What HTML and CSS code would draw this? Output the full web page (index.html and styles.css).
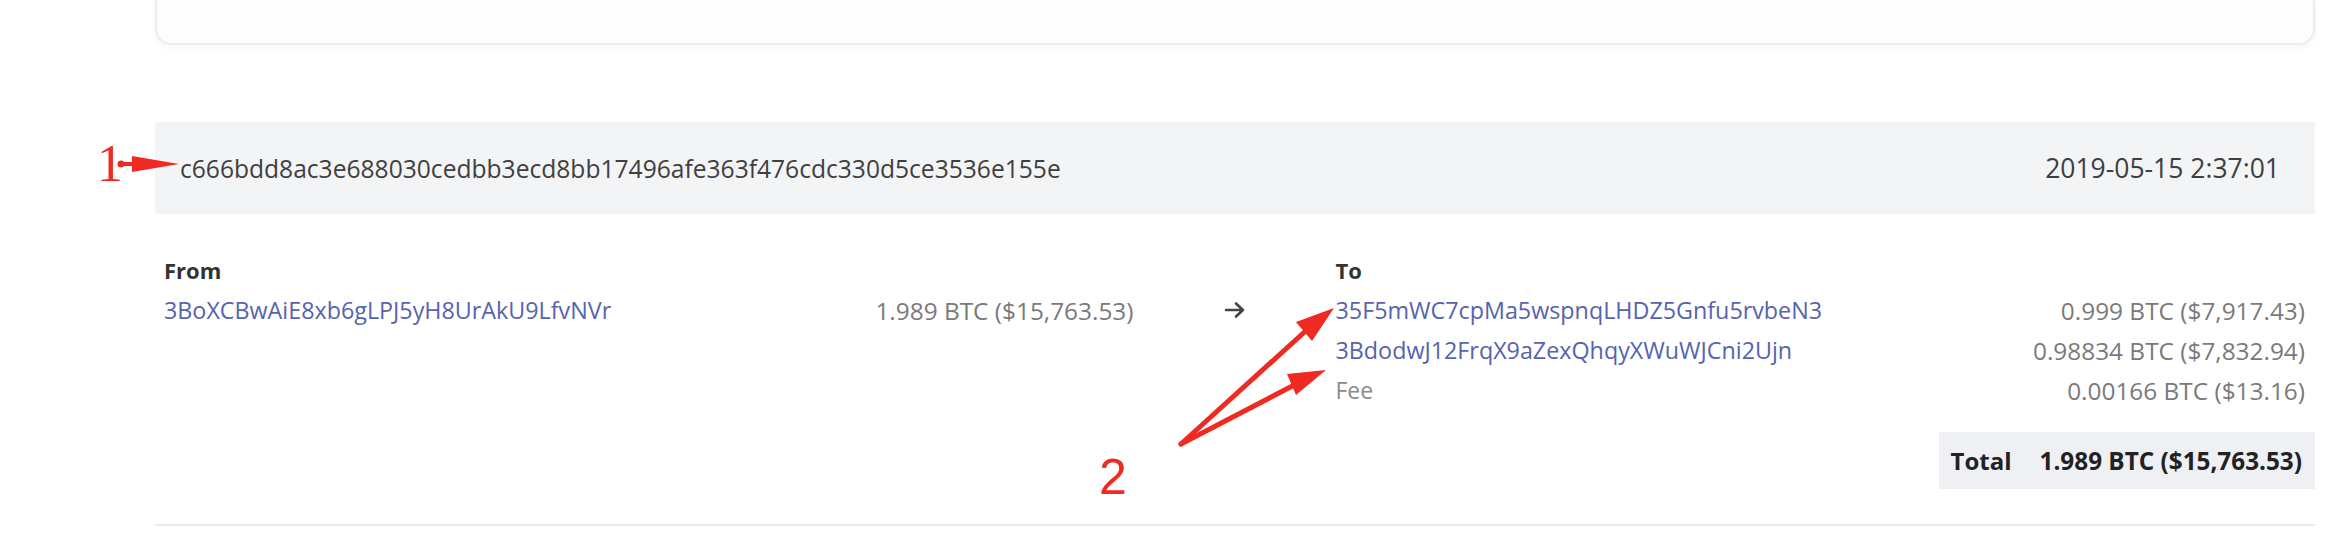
FILE: index.html
```html
<!DOCTYPE html>
<html lang="en">
<head>
<meta charset="utf-8">
<title>Transaction</title>
<link rel="stylesheet" href="styles.css">
</head>
<body>
<div class="page">
  <div class="top-card"></div>

  <section class="tx">
    <div class="tx-head">
      <span class="tx-hash">c666bdd8ac3e688030cedbb3ecd8bb17496afe363f476cdc330d5ce3536e155e</span>
      <span class="tx-date">2019-05-15 2:37:01</span>
    </div>
    <div class="tx-body">
      <div class="col">
        <div class="label">From</div>
        <div class="line">
          <a class="addr" href="#">3BoXCBwAiE8xb6gLPJ5yH8UrAkU9LfvNVr</a>
          <span class="amt">1.989 BTC ($15,763.53)</span>
        </div>
      </div>
      <div class="arrow-col">
        <div class="label">&nbsp;</div>
        <div class="line center">
          <svg class="arrow-icon" width="22" height="18" viewBox="0 0 22 18" aria-label="to">
            <path d="M2 9 H19 M12 2.5 L19 9 L12 15.5" fill="none" stroke="#444" stroke-width="2.6" stroke-linecap="round" stroke-linejoin="round"/>
          </svg>
        </div>
      </div>
      <div class="col">
        <div class="label">To</div>
        <div class="line">
          <a class="addr" href="#">35F5mWC7cpMa5wspnqLHDZ5Gnfu5rvbeN3</a>
          <span class="amt">0.999 BTC ($7,917.43)</span>
        </div>
        <div class="line">
          <a class="addr" href="#">3BdodwJ12FrqX9aZexQhqyXWuWJCni2Ujn</a>
          <span class="amt">0.98834 BTC ($7,832.94)</span>
        </div>
        <div class="line">
          <span class="fee">Fee</span>
          <span class="amt">0.00166 BTC ($13.16)</span>
        </div>
        <div class="total-row">
          <div class="total">
            <span class="total-label">Total</span>
            <span class="total-amt">1.989 BTC ($15,763.53)</span>
          </div>
        </div>
      </div>
    </div>
  </section>
</div>

<div class="annotations">
  <span class="num num-1">1</span>
  <span class="num num-2">2</span>
  <svg class="arrows" width="2342" height="540" viewBox="0 0 2342 540">
    <g fill="#ee2a22" stroke="#ee2a22" stroke-linecap="round">
      <circle cx="121" cy="164" r="3.5" stroke="none"/>
      <line x1="120" y1="164" x2="140" y2="164" stroke-width="4"/>
      <polygon points="132,156 179,164 132,172" stroke="none"/>
      <line x1="1181" y1="444" x2="1310" y2="327" stroke-width="5"/>
      <polygon points="1296,322 1334,308 1312,341" stroke="none"/>
      <line x1="1181" y1="444" x2="1300" y2="382" stroke-width="5"/>
      <polygon points="1287,374 1326,370 1296,395" stroke="none"/>
    </g>
  </svg>
</div>
</body>
</html>
```

FILE: styles.css
```css
html, body {
  margin: 0;
  padding: 0;
  background: #ffffff;
}

body {
  position: relative;
  width: 2342px;
  height: 540px;
  overflow: hidden;
  font-family: "Open Sans", "Noto Sans", "Liberation Sans", sans-serif;
  color: #333;
}

.page {
  padding-left: 155px;
  width: 2160px;
}

.top-card {
  height: 43px;
  border: 2px solid #ececec;
  border-top: none;
  border-radius: 0 0 16px 16px;
  box-shadow: 0 3px 6px rgba(0, 0, 0, 0.04);
  background: #fdfdfd;
}

.tx {
  margin-top: 77px;
  border-bottom: 2px solid #e8e8e8;
}

.tx-head {
  height: 92px;
  background: #f3f4f6;
  display: flex;
  align-items: center;
  justify-content: space-between;
  padding: 0 35px 0 25px;
  color: #3f3f3f;
}

.tx-hash {
  font-size: 24.6px;
}

.tx-date {
  font-size: 26.5px;
}

.tx-body {
  display: grid;
  grid-template-columns: 1fr 202px 1fr;
  padding: 36px 10px 35px 9px;
}

.label {
  font-weight: 700;
  font-size: 22px;
  line-height: 40px;
  color: #333;
}

.line {
  display: flex;
  justify-content: space-between;
  align-items: center;
  height: 40px;
}

.line.center {
  justify-content: center;
}

.arrow-icon {
  display: block;
}

.addr {
  color: #5663ad;
  text-decoration: none;
  font-size: 23.3px;
}

.amt {
  color: #7a7a7a;
  font-size: 24.4px;
}

.fee {
  color: #8a8a8a;
  font-size: 23px;
}

.total-row {
  display: flex;
  justify-content: flex-end;
  margin-top: 22px;
  margin-right: -10px;
}

.total {
  display: flex;
  align-items: center;
  gap: 28px;
  height: 57px;
  padding: 0 13px 0 12px;
  background: #eef0f3;
  font-weight: 700;
  color: #222;
}

.total-label {
  font-size: 24px;
}

.total-amt {
  font-size: 24.3px;
}

.annotations {
  position: absolute;
  left: 0;
  top: 0;
  width: 2342px;
  height: 540px;
  pointer-events: none;
}

.arrows {
  position: absolute;
  left: 0;
  top: 0;
}

.num {
  position: absolute;
  color: #ee2a22;
  line-height: 1;
}

.num-1 {
  left: 97px;
  top: 138px;
  font-family: "Liberation Serif", serif;
  font-size: 52px;
}

.num-2 {
  left: 1099px;
  top: 452px;
  font-family: "Liberation Sans", sans-serif;
  font-weight: 400;
  font-size: 50px;
}
```
